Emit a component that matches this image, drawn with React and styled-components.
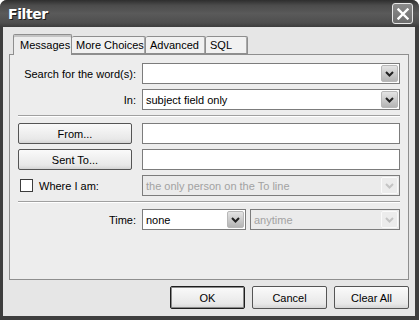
import React from 'react'
import styled, { createGlobalStyle } from 'styled-components'

const GlobalStyle = createGlobalStyle`
  html, body { margin: 0; padding: 0; background: #fff; }
  body { font-family: "Liberation Sans", Arial, sans-serif; font-size: 11px; color: #000; }
`;

const Chevron = ({ disabled }) => (
    <svg width="9" height="6" viewBox="0 0 9 6">
        <path d="M1 1 L4.5 4.5 L8 1" fill="none" stroke={disabled ? '#c4c4c4' : '#222'} strokeWidth="2" />
    </svg>
);

function Combo({ value, disabled, width }) {
    return (
        <ComboBox $disabled={disabled} $width={width}>
            <ComboText $disabled={disabled}>{value}</ComboText>
            <ArrowButton $disabled={disabled}><Chevron disabled={disabled} /></ArrowButton>
        </ComboBox>
    );
}

const tabs = [
    { name: 'Messages', width: 59 },
    { name: 'More Choices', width: 74 },
    { name: 'Advanced', width: 60 },
    { name: 'SQL', width: 42 },
];

export default function App() {
    return (
        <Window>
            <GlobalStyle />
            <TitleBar>
                <Title>Filter</Title>
                <CloseButton>
                    <svg width="12" height="12" viewBox="0 0 12 12">
                        <path d="M1.5 1.5 L10.5 10.5 M10.5 1.5 L1.5 10.5" stroke="#fff" strokeWidth="2.4" strokeLinecap="square" />
                    </svg>
                </CloseButton>
            </TitleBar>
            <Client>
                <TabRow>
                    {tabs.map((t, i) => (
                        <Tab key={t.name} $active={i === 0} $width={t.width}>{t.name}</Tab>
                    ))}
                </TabRow>
                <Panel>
                    <FormGrid>
                        <Label>Search for the word(s):</Label>
                        <Combo value="" />
                        <Label>In:</Label>
                        <Combo value="subject field only" />
                        <Separator />
                        <PushButton>From...</PushButton>
                        <TextInput />
                        <PushButton>Sent To...</PushButton>
                        <TextInput />
                        <CheckLabel><CheckBox />Where I am:</CheckLabel>
                        <Combo value="the only person on the To line" disabled />
                        <Separator />
                        <Label>Time:</Label>
                        <TimeRow>
                            <Combo value="none" width="104px" />
                            <Combo value="anytime" disabled />
                        </TimeRow>
                    </FormGrid>
                </Panel>
                <Footer>
                    <DialogButton $default>OK</DialogButton>
                    <DialogButton>Cancel</DialogButton>
                    <DialogButton>Clear All</DialogButton>
                </Footer>
            </Client>
        </Window>
    )
}

const Window = styled.div`
width: 419px;
height: 320px;
display: flex;
flex-direction: column;
background: #3e3e3e;
border-radius: 7px 7px 0 0;
overflow: hidden;
`;

const TitleBar = styled.div`
height: 29px;
display: flex;
align-items: center;
justify-content: space-between;
padding: 0 6px 0 8px;
background: linear-gradient(#2e2e2e 0%, #4c4c4c 20%, #5a5a5a 50%, #4e4e4e 85%, #3c3c3c 100%);
`;

const Title = styled.div`
color: #fff;
font-family: "DejaVu Sans", Verdana, sans-serif;
font-weight: bold;
font-size: 14px;
letter-spacing: -0.4px;
text-shadow: 1px 1px 0 #1a1a1a;
`;

const CloseButton = styled.div`
width: 19px;
height: 19px;
border: 1px solid #e8e8e8;
border-radius: 3px;
background: linear-gradient(#8a8a8a, #6e6e6e);
display: flex;
align-items: center;
justify-content: center;
`;

const Client = styled.div`
flex: 1;
display: flex;
flex-direction: column;
margin: 0 4px 4px 3px;
padding: 7px 6px 7px 6px;
background: #e6e6e6;
`;

const TabRow = styled.div`
display: flex;
align-items: flex-end;
padding-left: 4px;
height: 20px;
position: relative;
z-index: 1;
`;

const Tab = styled.div`
width: ${p => p.$width}px;
box-sizing: border-box;
height: ${p => (p.$active ? '21px' : '18px')};
margin-bottom: ${p => (p.$active ? '-1px' : '0')};
padding: 0 0 0 ${p => (p.$active ? '6px' : '4px')};
display: flex;
align-items: center;
background: ${p => (p.$active ? '#ededed' : '#f1f1f1')};
border: 1px solid #8e8e8e;
border-left: ${p => (p.$active ? '1px solid #8e8e8e' : 'none')};
border-bottom: ${p => (p.$active ? 'none' : '1px solid #8e8e8e')};
border-radius: 2px 2px 0 0;
box-shadow: ${p => (p.$active ? 'inset 0 2px 0 #c4c4c4' : 'inset -1px 0 0 #a8a8a8')};
font-size: 11px;
`;

const Panel = styled.div`
height: 226px;
box-sizing: border-box;
border: 1px solid #8e8e8e;
background: #ededed;
padding: 8px 8px 0 8px;
`;

const FormGrid = styled.div`
display: grid;
grid-template-columns: 118px 1fr;
grid-template-rows: 21px 21px 3px 21px 21px 21px 3px 21px;
column-gap: 6px;
row-gap: 5px;
`;

const Label = styled.div`
display: flex;
align-items: center;
justify-content: flex-end;
white-space: nowrap;
font-size: 11px;
`;

const CheckLabel = styled.div`
display: flex;
align-items: center;
gap: 6px;
padding-left: 2px;
white-space: nowrap;
font-size: 11px;
`;

const CheckBox = styled.div`
width: 11px;
height: 11px;
border: 1px solid #3c3c3c;
background: #fff;
`;

const Separator = styled.div`
grid-column: 1 / -1;
border-top: 1px solid #a0a0a0;
box-shadow: inset 0 1px 0 #fff;
`;

const ComboBox = styled.div`
width: ${p => p.$width || 'auto'};
flex: ${p => (p.$width ? 'none' : '1')};
box-sizing: border-box;
height: 21px;
display: flex;
align-items: center;
border: 1px solid #7c7c7c;
background: ${p => (p.$disabled ? '#ebebeb' : '#fff')};
padding: 1px;
`;

const ComboText = styled.div`
flex: 1;
padding-left: 2px;
font-size: 11px;
color: ${p => (p.$disabled ? '#a2a2a2' : '#000')};
white-space: nowrap;
overflow: hidden;
`;

const ArrowButton = styled.div`
width: 15px;
height: 15px;
display: flex;
align-items: center;
justify-content: center;
border-radius: 2px;
border: 1px solid ${p => (p.$disabled ? '#fafafa' : '#b8b8b8')};
background: ${p => (p.$disabled ? '#ececec' : 'linear-gradient(#e4e4e4, #b4b4b4)')};
`;

const TextInput = styled.div`
box-sizing: border-box;
height: 21px;
border: 1px solid #7c7c7c;
background: #fff;
`;

const PushButton = styled.div`
width: 114px;
box-sizing: border-box;
display: flex;
align-items: center;
justify-content: center;
border: 1px solid #555;
border-radius: 2px;
background: linear-gradient(#fafafa, #e8e8e8 80%, #d4d4d4);
font-size: 11px;
`;

const TimeRow = styled.div`
display: flex;
gap: 4px;
`;

const Footer = styled.div`
display: flex;
justify-content: flex-end;
gap: 7px;
margin-top: 6px;
`;

const DialogButton = styled.div`
width: 75px;
height: 23px;
box-sizing: border-box;
display: flex;
align-items: center;
justify-content: center;
border: 1px solid ${p => (p.$default ? '#1e1e1e' : '#555')};
box-shadow: ${p => (p.$default ? 'inset 0 0 0 1px #8a8a8a' : 'none')};
border-radius: 2px;
background: linear-gradient(#fafafa, #e8e8e8 80%, #d4d4d4);
font-size: 11px;
`;
